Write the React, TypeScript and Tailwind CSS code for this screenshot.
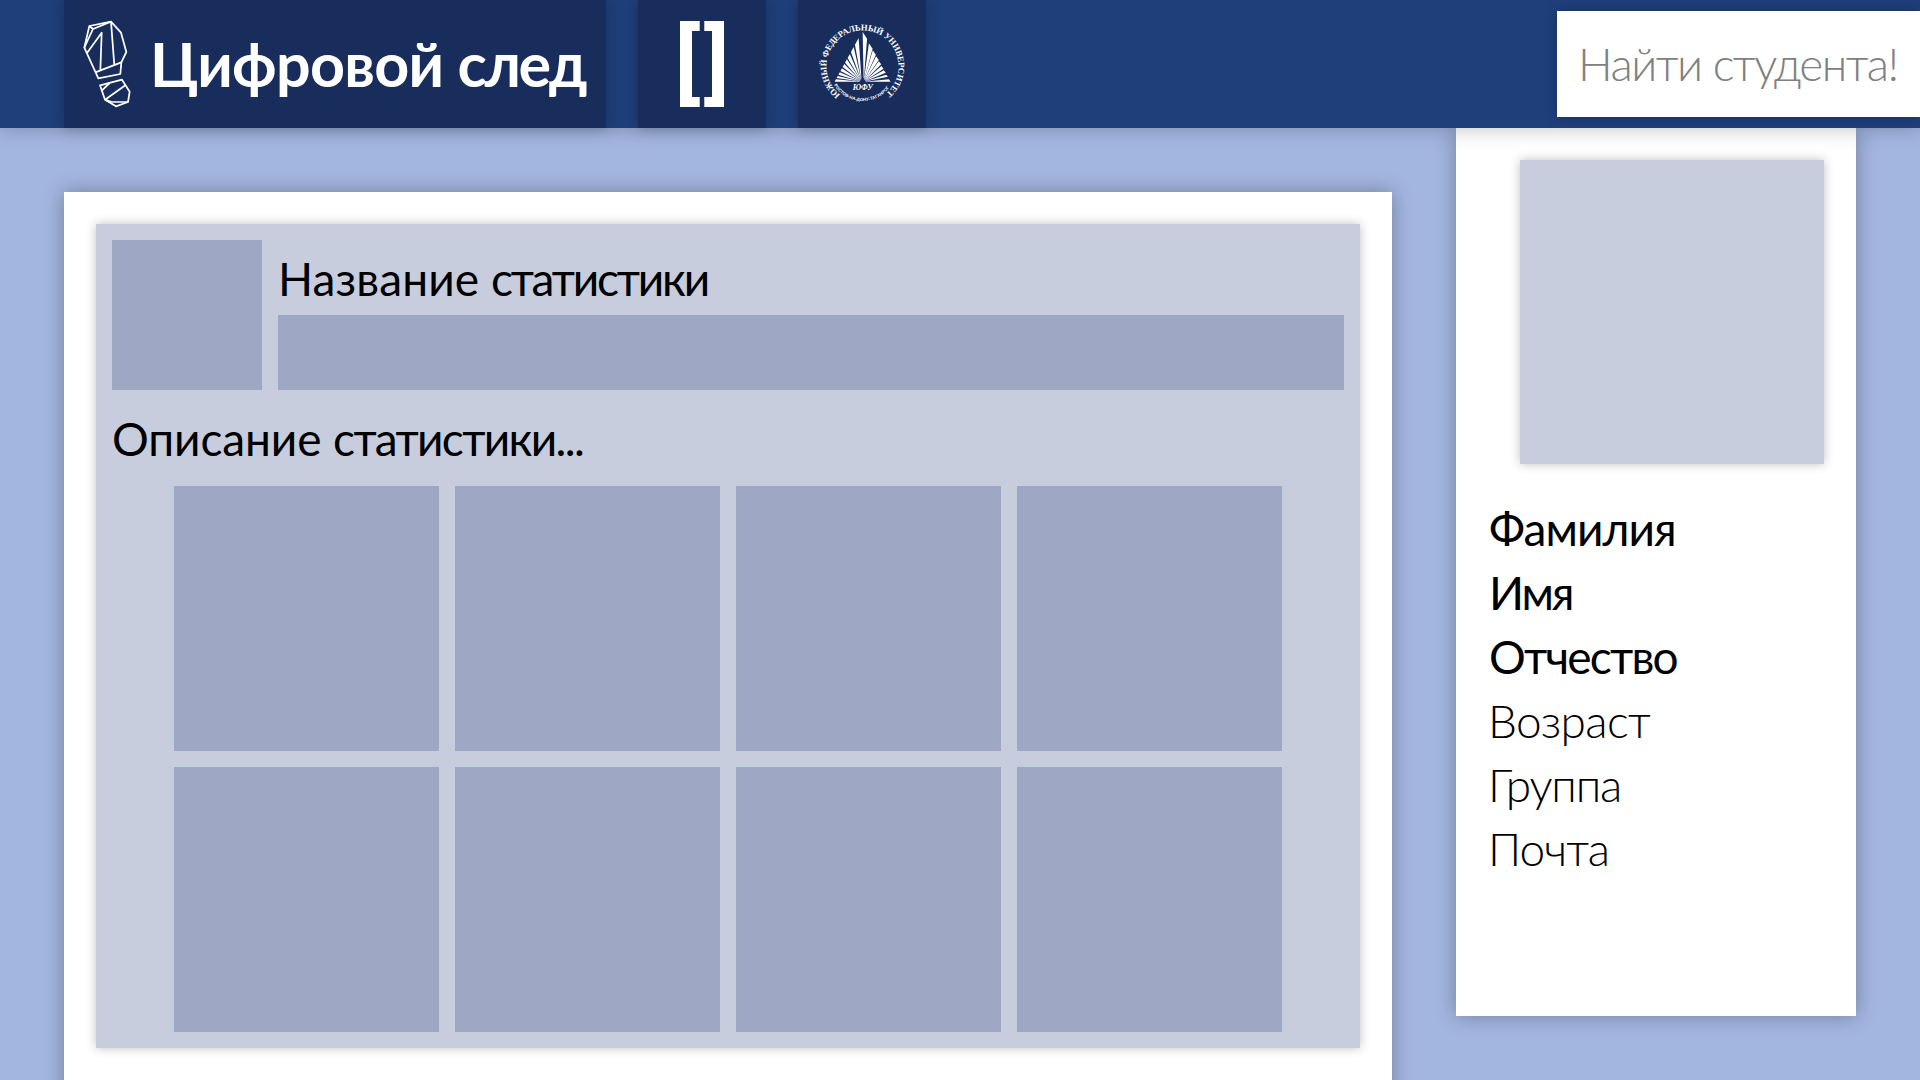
const LEFT_TIPS = [[72, 92], [99, 114], [120, 132], [136, 146], [150, 159], [163, 171], [175, 182], [186, 192], [196, 203]];
const RIGHT_TIPS = [[54, 74], [88, 104], [109, 122], [127, 138], [142, 151], [156, 164], [169, 176], [182, 188], [196, 203]];

function Footprint() {
  return (
    <svg className="mb-[3px] h-[105px] w-[65px] shrink-0" viewBox="0 0 195 315" fill="none" stroke="white" strokeWidth="5.2" strokeLinejoin="round">
      <path d="M28 113 43 48 108 35 138 68 154 126 139 157 136 192 70 205Z" />
      <path d="M108 35 54 57 28 113M43 48 54 57M36 129 80 68 76 183M108 35 118 166M61 187 139 157" />
      <path d="M75 226 141 209 164 245 159 276 123 289 90 269Z" />
      <path d="M81 241 104 219M90 269 151 226M90 269 110 276 159 276" />
    </svg>
  );
}

function Brackets() {
  return (
    <svg className="h-[86px] w-[44px]" viewBox="0 0 44 86" fill="white">
      <path d="M0 0H19.7V10H12V76H19.7V86H0Z" />
      <path d="M44 0H24.3V10H32V76H24.3V86H44Z" />
    </svg>
  );
}

function UniversityEmblem() {
  return (
    <svg className="h-[100px] w-[110px]" viewBox="0 0 330 300" fill="white">
      <defs>
        <path id="ring" d="M91 242A108 108 0 1 1 224 242" />
        <path id="smile" d="M72 213A100 100 0 0 0 243 213" />
      </defs>
      <text className="font-['Liberation_Serif',serif] text-[26px] font-bold">
        <textPath href="#ring" textLength="530" lengthAdjust="spacing">ЮЖНЫЙ ФЕДЕРАЛЬНЫЙ УНИВЕРСИТЕТ</textPath>
      </text>
      <text className="font-['Liberation_Sans',sans-serif] text-[13px] font-bold">
        <textPath href="#smile" textLength="196" lengthAdjust="spacing">РОСТОВ-НА-ДОНУ-ТАГАНРОГ</textPath>
      </text>
      <text x="128" y="228" textLength="60" lengthAdjust="spacingAndGlyphs" className="font-['Liberation_Serif',serif] text-[25px] font-bold italic">ЮФУ</text>
      {LEFT_TIPS.map(([top, bottom]) => (
        <path key={top} d={`M155 203L${158 - (bottom - 50) * 0.55} ${bottom}L${158 - (top - 50) * 0.55} ${top}Z`} />
      ))}
      {RIGHT_TIPS.map(([top, bottom]) => (
        <path key={top} d={`M161 203L${158 + (bottom - 50) * 0.55} ${bottom}L${158 + (top - 54) * 0.55} ${top}Z`} />
      ))}
      <path d="M148 204 158 188 168 204Z" fill="#182d5b" />
    </svg>
  );
}

export default function App() {
  return (
    <div className="flex h-[1080px] w-[1920px] flex-col overflow-hidden bg-[#a3b6e0] font-['Lato',sans-serif] text-[46px] leading-[64px] text-black">
      <header className="z-10 flex h-32 shrink-0 items-center gap-8 bg-[#1f3f7b] pl-16 shadow-[0_0_20px_rgba(0,0,0,0.25)]">
        <div className="flex h-32 w-[542px] items-center gap-[10px] bg-[#182d5b] pl-[11px] shadow-[0_0_14px_rgba(0,0,0,0.25)]">
          <Footprint />
          <h1 className="text-[61px] font-bold tracking-[-0.7px] whitespace-nowrap text-white">
            Цифровой <span className="tracking-[-2.4px]">след</span>
          </h1>
        </div>
        <div className="flex size-32 items-center justify-center bg-[#182d5b] shadow-[0_0_14px_rgba(0,0,0,0.25)]">
          <Brackets />
        </div>
        <div className="flex size-32 items-center bg-[#182d5b] pl-3 shadow-[0_0_14px_rgba(0,0,0,0.25)]">
          <UniversityEmblem />
        </div>
        <div className="ml-auto flex h-[106px] w-[363px] items-center bg-white pl-[21px] font-light tracking-[-1.5px] whitespace-nowrap text-[#808080] shadow-[0_0_12px_rgba(0,0,0,0.25)]">
          Найти студента!
        </div>
      </header>

      <div className="flex min-h-0 flex-1 items-start gap-16 pl-16">
        <main className="mt-16 h-[1000px] w-[1328px] shrink-0 bg-white p-8 shadow-[0_0_20px_rgba(0,0,0,0.3)]">
          <section className="flex h-[824px] flex-col bg-[#c8cddd] p-4 shadow-[0_0_10px_rgba(0,0,0,0.25)]">
            <div className="flex h-[150px] gap-4">
              <div className="w-[150px] shrink-0 bg-[#9ea8c5]" />
              <div className="flex flex-1 flex-col">
                <h2 className="h-[75px] pt-[7px] font-normal tracking-[0.1px] whitespace-nowrap">
                  Название <span className="tracking-[-2.2px]">статистики</span>
                </h2>
                <div className="h-[75px] bg-[#9ea8c5]" />
              </div>
            </div>
            <p className="h-24 pt-[17px] tracking-[-0.1px] whitespace-nowrap">
              Описание <span className="tracking-[-1.65px]">статистики...</span>
            </p>
            <div className="grid grid-cols-[repeat(4,265px)] justify-center gap-4">
              {Array.from({ length: 8 }, (_, i) => (
                <div key={i} className="h-[265px] bg-[#9ea8c5]" />
              ))}
            </div>
          </section>
        </main>

        <aside className="h-[888px] w-[400px] bg-white p-8 shadow-[0_0_20px_rgba(0,0,0,0.3)]">
          <div className="mb-[33px] ml-auto size-[304px] bg-[#c8cddd] shadow-[0_0_10px_rgba(0,0,0,0.25)]" />
          <div className="pl-px font-normal">
            <p className="tracking-[-0.9px]">Фамилия</p>
            <p className="tracking-[-2.3px]">Имя</p>
            <p className="tracking-[-1.8px]">Отчество</p>
          </div>
          <div className="font-light">
            <p className="tracking-[-0.6px]">Возраст</p>
            <p className="tracking-[-1.2px]">Группа</p>
            <p className="tracking-[-1px]">Почта</p>
          </div>
        </aside>
      </div>
    </div>
  );
}
